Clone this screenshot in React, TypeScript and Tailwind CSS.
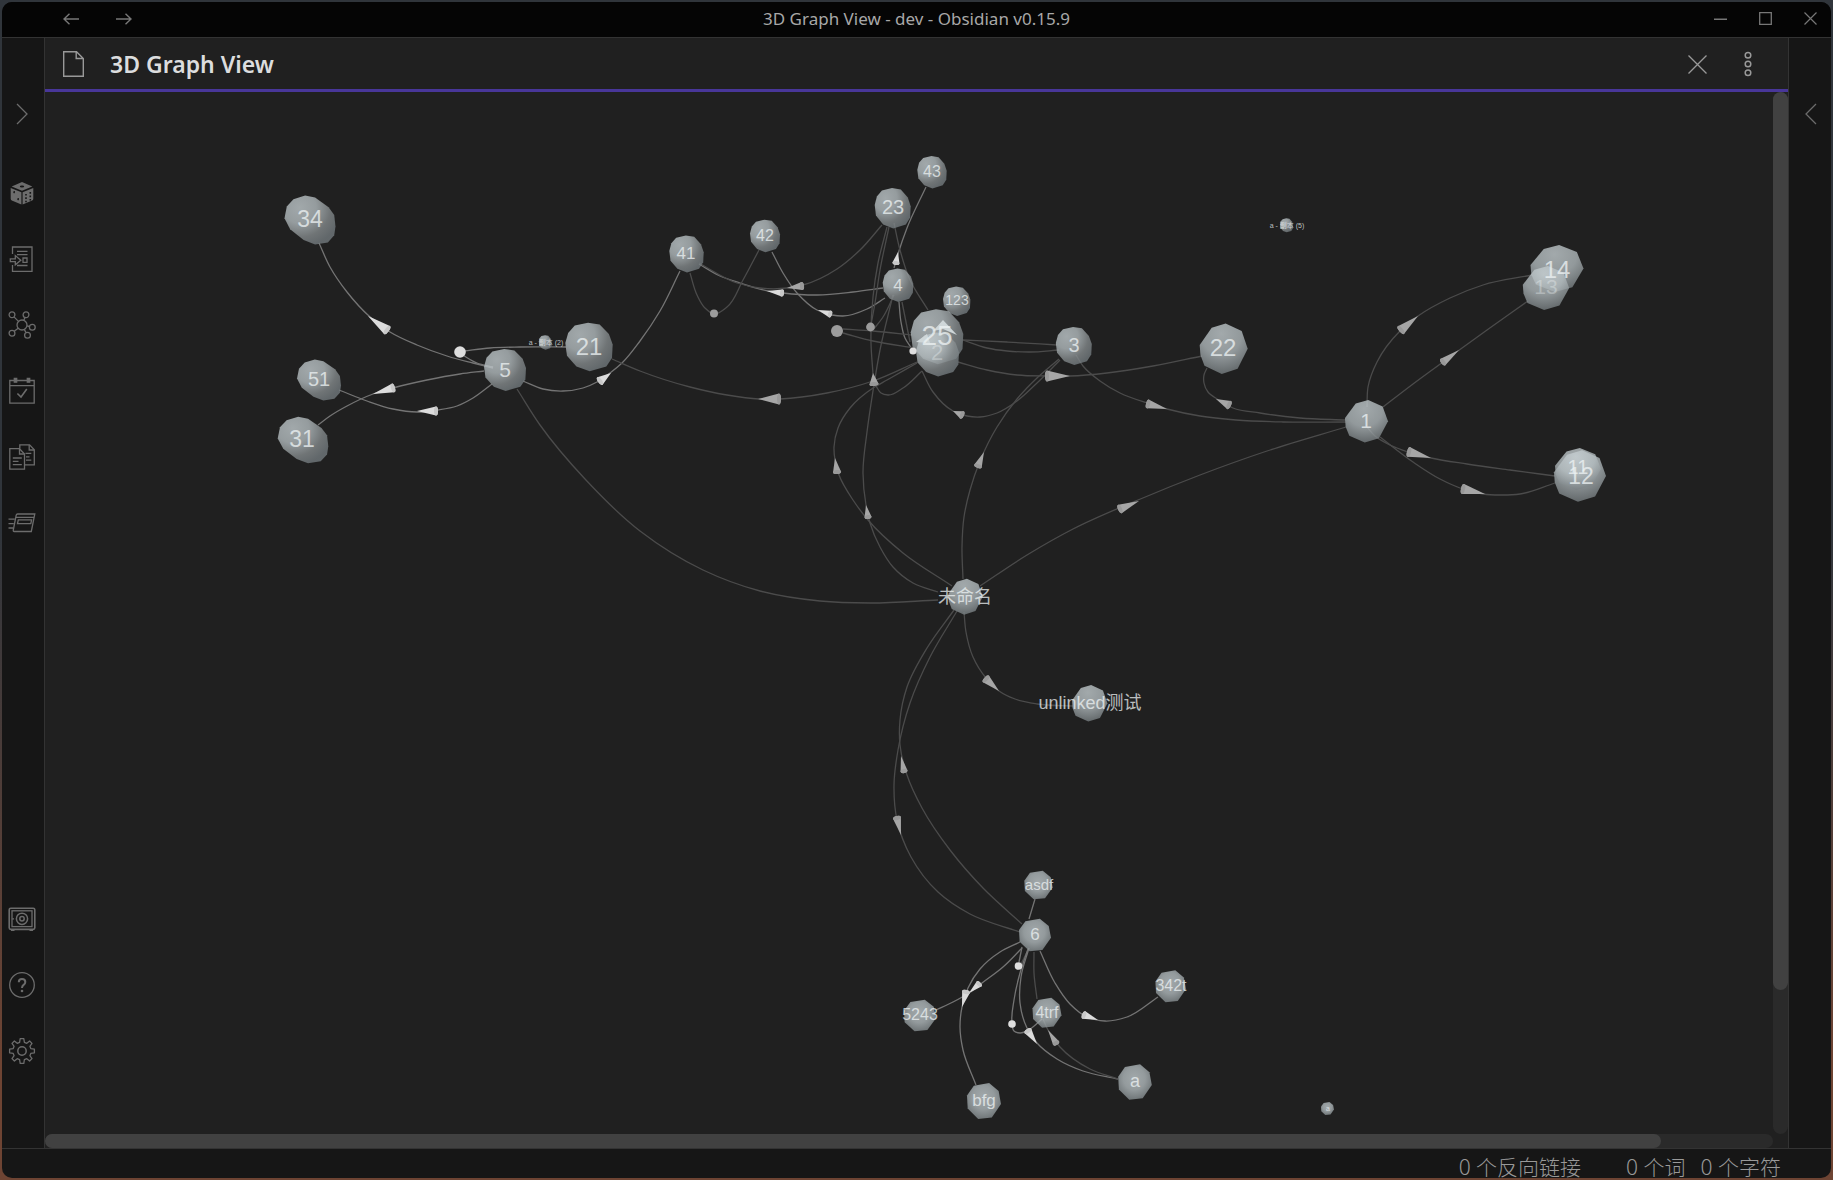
import React from "react";

type Point = [number, number];
type Tone = "bright" | "dim";

interface GraphLink {
  tone: Tone;
  points: Point[];
}

interface Arrow {
  tone: Tone;
  tip: Point;
  base: Point;
  width: number;
}

interface GraphNode {
  label: string;
  cx: number;
  cy: number;
  rx: number;
  ry: number;
  shape: keyof typeof SHAPES;
  text: Point; // label centre
  size: number; // label font size
  faded?: boolean; // label sits behind another mesh
}

// low-poly sphere outlines, in units of the node radius
const SHAPES = {
  stretched: [
    [-1, -0.07], [-0.91, -0.55], [-0.65, -0.85], [-0.19, -1], [0.2, -0.92],
    [0.73, -0.52], [0.95, -0.2], [1, 0.27], [0.95, 0.62], [0.7, 0.92],
    [0.2, 1], [-0.25, 0.82], [-0.78, 0.38],
  ],
  round: [
    [-1, -0.16], [-0.88, -0.58], [-0.6, -0.88], [-0.04, -1], [0.45, -0.93],
    [0.84, -0.53], [1, -0.1], [0.97, 0.45], [0.73, 0.8], [0.03, 1],
    [-0.53, 0.8], [-0.93, 0.36],
  ],
  facet: [
    [-1, -0.15], [-0.5, -0.83], [0.08, -1], [0.75, -0.7], [1, 0],
    [0.58, 0.8], [-0.08, 1], [-0.8, 0.68], [-0.97, 0.25],
  ],
  octagon: [
    [-1, -0.3], [-0.6, -0.85], [0.3, -1], [0.86, -0.55], [1, 0.17],
    [0.46, 0.92], [-0.34, 1], [-0.96, 0.42],
  ],
} as const;

const SHADES: Record<keyof typeof SHAPES, string> = {
  stretched: "url(#shade-corner)",
  round: "url(#shade-corner)",
  facet: "url(#shade-top)",
  octagon: "url(#shade-center)",
};

const nodes: GraphNode[] = [
  { label: "34", cx: 310, cy: 220, rx: 25.5, ry: 24.5, shape: "stretched", text: [310, 219], size: 23 },
  { label: "51", cx: 319, cy: 380, rx: 22, ry: 20.5, shape: "stretched", text: [319, 379], size: 20 },
  { label: "31", cx: 303, cy: 440, rx: 25.3, ry: 23.2, shape: "stretched", text: [302, 439], size: 23 },
  { label: "5", cx: 505, cy: 370, rx: 21, ry: 21, shape: "round", text: [505, 369], size: 21 },
  { label: "21", cx: 589, cy: 347, rx: 23.7, ry: 24.3, shape: "round", text: [589, 346], size: 24 },
  { label: "41", cx: 686.5, cy: 254, rx: 17.2, ry: 18.5, shape: "round", text: [686, 253], size: 17 },
  { label: "42", cx: 765, cy: 236, rx: 15, ry: 16.3, shape: "round", text: [765, 235], size: 16 },
  { label: "23", cx: 892.7, cy: 208.3, rx: 18, ry: 20.3, shape: "round", text: [893, 207], size: 20 },
  { label: "43", cx: 932, cy: 172.3, rx: 14.7, ry: 16.3, shape: "round", text: [932, 171], size: 16 },
  { label: "4", cx: 898, cy: 285.3, rx: 15.3, ry: 16.7, shape: "round", text: [898, 285], size: 17 },
  { label: "123", cx: 956.7, cy: 301.3, rx: 13.7, ry: 14.7, shape: "round", text: [957, 300], size: 14 },
  { label: "25", cx: 937, cy: 336.7, rx: 26.3, ry: 27.5, shape: "round", text: [937, 335], size: 28 },
  { label: "2", cx: 937.5, cy: 354.5, rx: 21.5, ry: 22, shape: "round", text: [937, 352], size: 22, faded: true },
  { label: "3", cx: 1073.8, cy: 346, rx: 18, ry: 19, shape: "round", text: [1074, 345], size: 20 },
  { label: "22", cx: 1223.7, cy: 348.7, rx: 24, ry: 25.2, shape: "facet", text: [1223, 347], size: 24 },
  { label: "14", cx: 1557, cy: 268.5, rx: 26.5, ry: 23.5, shape: "facet", text: [1557, 269], size: 24 },
  { label: "13", cx: 1546, cy: 288, rx: 23.2, ry: 22, shape: "facet", text: [1546, 286], size: 21, faded: true },
  { label: "1", cx: 1366.5, cy: 421.3, rx: 21.5, ry: 21.3, shape: "facet", text: [1366, 420], size: 21 },
  { label: "12", cx: 1580, cy: 476, rx: 26, ry: 25.7, shape: "facet", text: [1581, 476], size: 23 },
  { label: "11", cx: 1578, cy: 469, rx: 23, ry: 21, shape: "facet", text: [1578, 467], size: 20 },
  { label: "未命名", cx: 965.5, cy: 596.7, rx: 17.2, ry: 18, shape: "facet", text: [965, 597], size: 18 },
  { label: "unlinked测试", cx: 1089.7, cy: 703.3, rx: 17.7, ry: 18.3, shape: "facet", text: [1090, 703], size: 18 },
  { label: "asdf", cx: 1038.5, cy: 885, rx: 14.2, ry: 14.3, shape: "octagon", text: [1039, 884], size: 15 },
  { label: "6", cx: 1035, cy: 935, rx: 16, ry: 16.3, shape: "octagon", text: [1035, 934], size: 17 },
  { label: "5243", cx: 920, cy: 1015.5, rx: 16, ry: 15.8, shape: "octagon", text: [920, 1014], size: 16 },
  { label: "4trf", cx: 1047, cy: 1012.7, rx: 14.5, ry: 15, shape: "octagon", text: [1047, 1012], size: 16 },
  { label: "342t", cx: 1170.7, cy: 986.3, rx: 15.3, ry: 16, shape: "octagon", text: [1171, 985], size: 16 },
  { label: "a", cx: 1135, cy: 1082, rx: 16.8, ry: 17.7, shape: "octagon", text: [1135, 1081], size: 18 },
  { label: "bfg", cx: 984, cy: 1101, rx: 17, ry: 18, shape: "octagon", text: [984, 1100], size: 17 },
  { label: "a - 副本 (2)", cx: 545.3, cy: 342.5, rx: 6.5, ry: 7.3, shape: "round", text: [546, 342], size: 7 },
  { label: "a - 副本 (5)", cx: 1286.5, cy: 225.3, rx: 6.5, ry: 7, shape: "round", text: [1287, 225], size: 7 },
  { label: "a", cx: 1327.5, cy: 1108.5, rx: 6.5, ry: 6.5, shape: "octagon", text: [1328, 1108], size: 7 },
];

const links: GraphLink[] = [
  { tone: "bright", points: [[493, 368], [473, 363], [447, 356], [417, 345], [390, 332], [369, 316], [347, 292], [330, 267], [319, 243]] },
  { tone: "bright", points: [[493, 367], [477, 363], [461, 354]] },
  { tone: "bright", points: [[464, 351], [490, 348], [520, 347], [566, 347]] },
  { tone: "bright", points: [[484, 371], [460, 374], [427, 380], [393, 388], [373, 394], [347, 406], [330, 416], [318, 425]] },
  { tone: "bright", points: [[492, 384], [473, 398], [457, 406], [438, 410], [417, 412], [393, 409], [367, 401], [339, 390]] },
  { tone: "bright", points: [[523, 381], [543, 389], [563, 391], [583, 388], [597, 382], [610, 373], [622, 363], [640, 341], [660, 311], [680, 271]] },
  { tone: "dim", points: [[517, 389], [540, 425], [585, 479], [640, 531], [703, 570], [760, 591], [820, 601], [870, 603], [938, 600]] },
  { tone: "dim", points: [[612, 359], [640, 371], [690, 387], [727, 395], [759, 399], [780, 399], [827, 393], [873, 381], [917, 362]] },
  { tone: "bright", points: [[699, 264], [720, 276], [740, 283], [768, 291], [783, 293], [817, 295], [853, 292], [883, 288]] },
  { tone: "dim", points: [[882, 225], [860, 250], [837, 269], [803, 285], [787, 288], [760, 288], [737, 283], [699, 263]] },
  { tone: "dim", points: [[690, 273], [697, 295], [705, 308], [714, 314], [727, 307], [743, 280], [759, 250]] },
  { tone: "bright", points: [[885, 298], [867, 309], [843, 316], [832, 315], [817, 310], [797, 293], [783, 273], [772, 252]] },
  { tone: "bright", points: [[894, 268], [898, 254], [907, 228], [926, 187]] },
  { tone: "dim", points: [[887, 227], [878, 263], [873, 297], [871, 343], [873, 374]] },
  { tone: "dim", points: [[889, 227], [880, 270], [875, 303], [871, 325]] },
  { tone: "dim", points: [[873, 330], [883, 317], [894, 295]] },
  { tone: "dim", points: [[893, 295], [880, 350], [873, 391], [867, 432], [863, 473], [866, 505], [870, 523], [880, 547], [893, 567], [913, 583], [938, 592]] },
  { tone: "dim", points: [[917, 363], [887, 380], [873, 388], [850, 408], [838, 428], [834, 447], [835, 460], [839, 475], [853, 500], [868, 520], [903, 553], [952, 586]] },
  { tone: "dim", points: [[876, 386], [881, 393], [888, 395], [903, 388], [922, 371]] },
  { tone: "dim", points: [[894, 223], [900, 250], [910, 280], [928, 310]] },
  { tone: "bright", points: [[899, 302], [901, 322], [905, 338], [912, 349]] },
  { tone: "dim", points: [[902, 302], [907, 327], [910, 342]] },
  { tone: "dim", points: [[843, 329], [873, 331], [912, 335]] },
  { tone: "dim", points: [[843, 333], [873, 341], [915, 348]] },
  { tone: "dim", points: [[963, 340], [1007, 342], [1057, 345]] },
  { tone: "dim", points: [[963, 340], [987, 348], [1007, 351], [1030, 352], [1059, 350]] },
  { tone: "dim", points: [[958, 362], [987, 370], [1017, 375], [1047, 376], [1070, 376], [1107, 373], [1153, 366], [1202, 356]] },
  { tone: "dim", points: [[1076, 355], [1083, 366], [1100, 381], [1120, 393], [1147, 403], [1167, 409], [1200, 416], [1236, 420], [1283, 422], [1346, 422]] },
  { tone: "dim", points: [[1346, 420], [1300, 418], [1260, 413], [1233, 408], [1217, 399], [1208, 392], [1204, 383], [1204, 375], [1207, 368]] },
  { tone: "dim", points: [[922, 371], [933, 392], [953, 411], [967, 416], [980, 417], [997, 413], [1017, 401], [1037, 383], [1060, 360]] },
  { tone: "dim", points: [[963, 579], [962, 547], [964, 517], [970, 490], [980, 461], [997, 427], [1017, 399], [1037, 378], [1059, 359]] },
  { tone: "dim", points: [[980, 586], [1027, 555], [1073, 529], [1138, 500], [1200, 475], [1267, 451], [1346, 427]] },
  { tone: "dim", points: [[1367, 407], [1368, 387], [1377, 362], [1400, 331], [1418, 316], [1450, 298], [1483, 285], [1532, 275]] },
  { tone: "dim", points: [[1383, 407], [1413, 384], [1443, 362], [1487, 330], [1528, 301]] },
  { tone: "dim", points: [[1367, 427], [1375, 436], [1390, 445], [1408, 452], [1431, 458], [1467, 464], [1510, 470], [1555, 476]] },
  { tone: "dim", points: [[1380, 437], [1413, 462], [1440, 479], [1463, 489], [1483, 494], [1500, 495], [1520, 494], [1555, 483]] },
  { tone: "dim", points: [[964, 612], [966, 632], [973, 657], [986, 678], [999, 691], [1015, 699], [1037, 704], [1073, 706]] },
  { tone: "dim", points: [[954, 610], [927, 648], [907, 687], [900, 720], [900, 745], [907, 775], [922, 808], [950, 850], [983, 888], [1022, 924]] },
  { tone: "dim", points: [[957, 611], [930, 657], [910, 703], [898, 750], [894, 785], [897, 820], [911, 857], [938, 892], [970, 914], [1020, 932]] },
  { tone: "bright", points: [[1029, 919], [1035, 899]] },
  { tone: "bright", points: [[1022, 947], [1019, 962]] },
  { tone: "dim", points: [[1028, 950], [1020, 966]] },
  { tone: "bright", points: [[1022, 948], [1003, 967], [982, 983], [969, 993], [953, 1002], [936, 1010]] },
  { tone: "bright", points: [[1020, 942], [1000, 952], [980, 969], [968, 988], [962, 1007], [960, 1027], [963, 1050], [976, 1085]] },
  { tone: "bright", points: [[1028, 949], [1020, 973], [1014, 1000], [1012, 1022], [1014, 1031], [1020, 1033], [1030, 1029], [1042, 1019]] },
  { tone: "bright", points: [[1029, 948], [1021, 977], [1020, 1003], [1027, 1028], [1037, 1043], [1057, 1059], [1083, 1071], [1118, 1079]] },
  { tone: "dim", points: [[1118, 1079], [1090, 1069], [1060, 1047], [1048, 1030], [1043, 1019]] },
  { tone: "dim", points: [[1037, 999], [1034, 973], [1034, 952]] },
  { tone: "bright", points: [[1040, 951], [1055, 983], [1070, 1004], [1087, 1017], [1105, 1021], [1127, 1017], [1158, 997]] },
];

const arrows: Arrow[] = [
  { tone: "bright", tip: [368, 316], base: [387, 330], width: 10 },
  { tone: "bright", tip: [373, 394], base: [393, 388], width: 9 },
  { tone: "bright", tip: [417, 411], base: [436, 411], width: 9 },
  { tone: "bright", tip: [611, 373], base: [600, 381], width: 9 },
  { tone: "bright", tip: [767, 291], base: [782, 293], width: 7 },
  { tone: "dim", tip: [787, 288], base: [802, 286], width: 8 },
  { tone: "bright", tip: [818, 310], base: [830, 314], width: 7 },
  { tone: "bright", tip: [898, 252], base: [896, 263], width: 7 },
  { tone: "dim", tip: [758, 399], base: [779, 399], width: 11 },
  { tone: "dim", tip: [873, 373], base: [874, 384], width: 9 },
  { tone: "dim", tip: [953, 411], base: [962, 415], width: 8 },
  { tone: "dim", tip: [1070, 376], base: [1047, 376], width: 11 },
  { tone: "dim", tip: [1167, 409], base: [1148, 404], width: 9 },
  { tone: "dim", tip: [1216, 399], base: [1229, 405], width: 9 },
  { tone: "dim", tip: [835, 458], base: [837, 472], width: 8 },
  { tone: "dim", tip: [866, 505], base: [868, 517], width: 7 },
  { tone: "dim", tip: [984, 452], base: [978, 466], width: 8 },
  { tone: "dim", tip: [1139, 501], base: [1120, 509], width: 9 },
  { tone: "dim", tip: [1418, 316], base: [1401, 330], width: 10 },
  { tone: "dim", tip: [1459, 350], base: [1443, 362], width: 8 },
  { tone: "dim", tip: [1431, 458], base: [1409, 452], width: 10 },
  { tone: "dim", tip: [1485, 494], base: [1463, 489], width: 10 },
  { tone: "dim", tip: [999, 691], base: [986, 679], width: 9 },
  { tone: "dim", tip: [901, 756], base: [904, 771], width: 7 },
  { tone: "dim", tip: [901, 835], base: [897, 818], width: 8 },
  { tone: "bright", tip: [969, 993], base: [979, 984], width: 7 },
  { tone: "bright", tip: [962, 1007], base: [966, 992], width: 8 },
  { tone: "bright", tip: [1037, 1044], base: [1028, 1031], width: 8 },
  { tone: "dim", tip: [1048, 1030], base: [1056, 1043], width: 7 },
  { tone: "bright", tip: [1098, 1020], base: [1084, 1015], width: 8 },
];

// arrow cones that face the camera
const cones: { tone: Tone; at: Point; r: number }[] = [
  { tone: "bright", at: [460, 352], r: 5.8 },
  { tone: "dim", at: [714, 313.5], r: 4 },
  { tone: "dim", at: [837, 331], r: 6 },
  { tone: "dim", at: [870.5, 327], r: 4.4 },
  { tone: "bright", at: [913, 351], r: 3.6 },
  { tone: "bright", at: [1018.5, 966], r: 3.8 },
  { tone: "bright", at: [1012, 1024], r: 3.8 },
];

const dist = (a: Point, b: Point) => Math.hypot(b[0] - a[0], b[1] - a[1]);

// direction of the curve at pts[i], weighted by the distance to its neighbours
const tangent = (pts: Point[], i: number): Point => {
  const p = pts[i];
  const prev = pts[i - 1];
  const next = pts[i + 1];
  if (!prev || !next) {
    const a = prev ?? p;
    const b = next ?? p;
    const d = dist(a, b);
    return [(b[0] - a[0]) / d, (b[1] - a[1]) / d];
  }
  const d0 = dist(prev, p);
  const d1 = dist(p, next);
  const along = (k: 0 | 1) =>
    (((p[k] - prev[k]) / d0) * d1 + ((next[k] - p[k]) / d1) * d0) / (d0 + d1);
  return [along(0), along(1)];
};

const linePath = (pts: Point[]) => {
  let d = `M${pts[0][0]} ${pts[0][1]}`;
  for (let i = 0; i < pts.length - 1; i++) {
    const p = pts[i];
    const q = pts[i + 1];
    const t0 = tangent(pts, i);
    const t1 = tangent(pts, i + 1);
    const h = dist(p, q) / 3;
    d += `C${p[0] + t0[0] * h} ${p[1] + t0[1] * h} ${q[0] - t1[0] * h} ${
      q[1] - t1[1] * h
    } ${q[0]} ${q[1]}`;
  }
  return d;
};

const ArrowHead: React.FC<Arrow> = ({ tone, tip, base, width }) => {
  const dx = tip[0] - base[0];
  const dy = tip[1] - base[1];
  const len = Math.hypot(dx, dy);
  const half = width / 2;
  const angle = (Math.atan2(dy, dx) * 180) / Math.PI;
  return (
    <g transform={`translate(${base[0]} ${base[1]}) rotate(${angle})`}>
      <path
        d={`M${len} 0L0 ${-half}A2 ${half} 0 0 0 0 ${half}Z`}
        fill={tone === "bright" ? "#dcdcdc" : "#a6a6a6"}
      />
      <ellipse
        rx={2}
        ry={half}
        fill={tone === "bright" ? "#c8c8c8" : "#999999"}
      />
    </g>
  );
};

const Graph = () => (
  <svg
    viewBox="45 92 1728 1042"
    className="block h-full w-full"
    role="img"
    aria-label="3D graph"
  >
    <defs>
      <radialGradient id="shade-corner" cx="0.3" cy="0.25" r="0.8">
        <stop offset="0" stopColor="#cad3d6" />
        <stop offset="0.4" stopColor="#bac3c6" />
        <stop offset="0.75" stopColor="#898f91" />
        <stop offset="1" stopColor="#767e82" />
      </radialGradient>
      <radialGradient id="shade-top" cx="0.45" cy="0.2" r="0.85">
        <stop offset="0" stopColor="#cbd4d7" />
        <stop offset="0.5" stopColor="#b6bfc2" />
        <stop offset="1" stopColor="#70777a" />
      </radialGradient>
      <radialGradient id="shade-center" cx="0.48" cy="0.4" r="0.65">
        <stop offset="0" stopColor="#cad3d6" />
        <stop offset="0.5" stopColor="#b8c1c4" />
        <stop offset="1" stopColor="#80888b" />
      </radialGradient>
    </defs>

    {links.map((link, i) => (
      <path
        key={i}
        d={linePath(link.points)}
        fill="none"
        stroke={link.tone === "bright" ? "#747474" : "#4b4b4b"}
        strokeWidth={1.3}
      />
    ))}

    {nodes.map((node, i) => (
      <polygon
        key={i}
        points={SHAPES[node.shape]
          .map(([x, y]) => `${node.cx + x * node.rx},${node.cy + y * node.ry}`)
          .join(" ")}
        fill={SHADES[node.shape]}
        fillOpacity={0.76}
      />
    ))}

    {/* two arrows seen through node 25 */}
    <path d="M943 320L933 331L943 329L957 335Z" fill="#cfd7d9" />
    <path d="M916 342L927 334L930 343Z" fill="#cfd7d9" />

    {nodes.map((node, i) => (
      <text
        key={i}
        x={node.text[0]}
        y={node.text[1]}
        fontSize={node.size}
        fill="#eef3f4"
        fillOpacity={node.faded ? 0.35 : 0.75}
        textAnchor="middle"
        dominantBaseline="central"
        className="font-['Liberation_Sans','Noto_Sans_CJK_SC',sans-serif]"
      >
        {node.label}
      </text>
    ))}

    {arrows.map((arrow, i) => (
      <ArrowHead key={i} {...arrow} />
    ))}
    {cones.map((cone, i) => (
      <circle
        key={i}
        cx={cone.at[0]}
        cy={cone.at[1]}
        r={cone.r}
        fill={cone.tone === "bright" ? "#dedede" : "#9c9c9c"}
      />
    ))}
  </svg>
);

const Icon: React.FC<{ children: React.ReactNode }> = ({ children }) => (
  <svg
    viewBox="0 0 28 28"
    className="h-7 w-7"
    fill="none"
    stroke="currentColor"
    strokeWidth={1.3}
    aria-hidden="true"
  >
    {children}
  </svg>
);

const DiceIcon = () => (
  <Icon>
    <g fill="currentColor" stroke="none" fillRule="evenodd">
      <path d="M14 3L24.3 7.6L14 11.8L3.7 7.6ZM14 6.6A2.2 0.9 0 1 0 14 8.4A2.2 0.9 0 1 0 14 6.6Z" />
      <path d="M2.7 9L13.4 13.2V25.6L3.8 21.5Q2.7 21 2.7 19.8ZM5.4 12.8a.8 1 0 1 0 1.5 .6a.8 1 0 1 0-1.5-.6ZM9.4 19.8a.8 1 0 1 0 1.5 .6a.8 1 0 1 0-1.5-.6Z" />
      <path d="M25.3 9L14.6 13.2V25.6L24.2 21.5Q25.3 21 25.3 19.8ZM17.2 14.9h1.6v1.6h-1.6ZM21.5 13.1h1.6v1.6h-1.6ZM17.2 18.3h1.6v1.6h-1.6ZM21.5 16.6h1.6v1.6h-1.6ZM17.2 21.7h1.6v1.6h-1.6ZM21.5 20h1.6v1.6h-1.6Z" />
    </g>
  </Icon>
);

const InsertIcon = () => (
  <Icon>
    <path d="M4.5 9V2H24V26.4H4.5V20" />
    <path d="M9 6.3H19.5M9 9.6H19.5M9 20.5H19.5" />
    <path d="M2.3 13.8H7.3V10.6L12.8 15.2L7.3 19.8V16.7H2.3Z" />
    <path d="M15 13H19V17.4H15Z" />
  </Icon>
);

const GraphIcon = () => (
  <Icon>
    <circle cx="14" cy="14" r="5" />
    <circle cx="4" cy="3.8" r="2.9" />
    <circle cx="18" cy="3.8" r="2.9" />
    <circle cx="24.3" cy="16.2" r="2.9" />
    <circle cx="19.5" cy="24.2" r="2.9" />
    <circle cx="4" cy="22.2" r="2.9" />
    <path d="M6 5.9L10.5 10.4M17 6.5L15.8 9.3M19 14.9L21.4 15.5M16.3 18.4L18 21.6M6.2 20.3L10.2 17.3" />
  </Icon>
);

const CalendarIcon = () => (
  <Icon>
    <path d="M1.8 3.5H26.2V26.2H1.8ZM1.8 8.6H26.2" />
    <path d="M6.3 1.5H8.7V5.2H6.3ZM19.3 1.5H21.7V5.2H19.3Z" fill="currentColor" />
    <path d="M9.4 16.5L13 20L18.8 12" strokeWidth={1.6} />
  </Icon>
);

const FilesIcon = () => (
  <Icon>
    <path d="M1.8 5.7H11.5L16.5 11V26.2H1.8Z" />
    <path d="M11.5 5.7V11H16.5" />
    <path d="M11.8 5.5V1.8H21.6L26.3 6.8V21.8H17" />
    <path d="M21.2 2V7H26" />
    <path d="M4.8 15H13.8M4.8 18.3H10.5M4.8 21.6H13.8M17.5 10.4H23.3M18 13.8H21.5M18 17.2H23.3" />
  </Icon>
);

const PromptIcon = () => (
  <Icon>
    <path d="M9.5 5H26.8L23.3 22.5H6.2Q5 22.5 5.3 21L8.2 6.2Q8.5 5 9.5 5ZM8 8.3H26" />
    <path d="M10.3 10.8H23.6L22.8 14.7H9.5Z" />
    <path d="M0.5 10.2H6.8M0.5 14.6H5.8M0.5 19H5" />
  </Icon>
);

const VaultIcon = () => (
  <Icon>
    <rect x="1.2" y="3.2" width="25.6" height="21.2" rx="1.6" strokeWidth={1.6} />
    <rect x="4" y="5.8" width="20" height="15.8" />
    <circle cx="14" cy="13.8" r="5.6" strokeWidth={1.5} />
    <circle cx="14" cy="13.8" r="2.2" strokeWidth={1.5} />
    <path d="M4.2 13.8H6M3 25.3H6.5M21.5 25.3H25" />
  </Icon>
);

const HelpIcon = () => (
  <Icon>
    <circle cx="14" cy="14" r="12.3" />
    <path
      d="M10.8 11.2Q10.8 8 14 8Q17.3 8 17.3 10.9Q17.3 12.6 15.6 13.9Q14 15.1 14 17"
      strokeWidth={2}
    />
    <circle cx="14" cy="20" r="1.3" fill="currentColor" stroke="none" />
  </Icon>
);

const GearIcon = () => (
  <Icon>
    <circle cx="14" cy="14" r="4.2" strokeWidth={1.5} />
    <path
      strokeLinejoin="round"
      d="M12.2 1.6H15.8L16.4 5.3L18.8 6.3L21.6 4L24 6.4L21.9 9.3L22.8 11.6L26.4 12.2V15.8L22.8 16.4L21.9 18.7L24 21.6L21.6 24L18.8 21.7L16.4 22.7L15.8 26.4H12.2L11.6 22.7L9.2 21.7L6.4 24L4 21.6L6.1 18.7L5.2 16.4L1.6 15.8V12.2L5.2 11.6L6.1 9.3L4 6.4L6.4 4L9.2 6.3L11.6 5.3Z"
    />
  </Icon>
);

const ribbonActions = [
  { name: "Open random note", icon: <DiceIcon /> },
  { name: "Insert template", icon: <InsertIcon /> },
  { name: "Open graph view", icon: <GraphIcon /> },
  { name: "Open daily note", icon: <CalendarIcon /> },
  { name: "Copy files", icon: <FilesIcon /> },
  { name: "Open command palette", icon: <PromptIcon /> },
];

const vaultActions = [
  { name: "Open another vault", icon: <VaultIcon /> },
  { name: "Help", icon: <HelpIcon /> },
  { name: "Settings", icon: <GearIcon /> },
];

const RibbonButton: React.FC<{ name: string; children: React.ReactNode }> = ({
  name,
  children,
}) => (
  <button
    type="button"
    aria-label={name}
    className="flex h-[66px] w-full items-center justify-center"
  >
    {children}
  </button>
);

const TitleBar = () => (
  <header className="grid h-9 shrink-0 grid-cols-[1fr_auto_1fr] items-center border-b border-[#333] bg-[#050505] pb-0.5 text-[#777]">
    <nav className="flex gap-[37px] pl-[61px]">
      <button type="button" aria-label="Back">
        <svg viewBox="0 0 16 12" className="h-3 w-4" fill="none" stroke="currentColor" strokeWidth={1.4}>
          <path d="M16 6H1M6.5 0.7L1 6L6.5 11.3" />
        </svg>
      </button>
      <button type="button" aria-label="Forward">
        <svg viewBox="0 0 16 12" className="h-3 w-4" fill="none" stroke="currentColor" strokeWidth={1.4}>
          <path d="M0 6H15M9.5 0.7L15 6L9.5 11.3" />
        </svg>
      </button>
    </nav>
    <h1 className="text-[17px] leading-6 text-[#a8a8a8]">
      3D Graph View - dev - Obsidian v0.15.9
    </h1>
    <div className="flex justify-end gap-8 pr-3.5">
      <button type="button" aria-label="Minimize">
        <svg viewBox="0 0 13 13" className="h-[13px] w-[13px]" stroke="currentColor" strokeWidth={1.6}>
          <path d="M0 7.2H13" />
        </svg>
      </button>
      <button type="button" aria-label="Maximize">
        <svg viewBox="0 0 13 13" className="h-[13px] w-[13px]" fill="none" stroke="currentColor" strokeWidth={1.3}>
          <path d="M0.7 0.7H12.3V12.3H0.7Z" />
        </svg>
      </button>
      <button type="button" aria-label="Close window">
        <svg viewBox="0 0 13 13" className="h-[13px] w-[13px]" stroke="currentColor" strokeWidth={1.2}>
          <path d="M0.5 0.5L12.5 12.5M12.5 0.5L0.5 12.5" />
        </svg>
      </button>
    </div>
  </header>
);

const ViewHeader = () => (
  <div className="flex h-[54px] shrink-0 items-center border-b-3 border-[#483699] pr-[35px] pl-[18px] text-[#999]">
    <svg viewBox="0 0 21 26" className="h-[26px] w-[21px]" fill="none" stroke="currentColor" strokeWidth={1.4} aria-hidden="true">
      <path d="M0.7 0.7H13.5L20.3 7.5V25.3H0.7ZM13.2 1V7.5H20" />
    </svg>
    <h2 className="ml-[26px] flex-1 text-[23px] leading-8 font-semibold text-[#dcddde]">
      3D Graph View
    </h2>
    <button type="button" aria-label="Close" className="mt-0.5 mr-9">
      <svg viewBox="0 0 19 19" className="h-[19px] w-[19px]" stroke="currentColor" strokeWidth={1.3}>
        <path d="M0.5 0.5L18.5 18.5M18.5 0.5L0.5 18.5" />
      </svg>
    </button>
    <button type="button" aria-label="More options">
      <svg viewBox="0 0 10 26" className="h-[26px] w-2.5" fill="none" stroke="currentColor" strokeWidth={1.5}>
        <circle cx="5" cy="4.3" r="2.8" />
        <circle cx="5" cy="13" r="2.8" />
        <circle cx="5" cy="21.7" r="2.8" />
      </svg>
    </button>
  </div>
);

export default function App() {
  return (
    <div className="h-screen bg-linear-to-b from-[#30353b] from-45% to-[#6e4433] to-90% p-0.5 font-['Noto_Sans','Noto_Sans_CJK_SC',sans-serif]">
      <div className="flex h-full flex-col overflow-hidden rounded-[10px] bg-[#161616]">
        <TitleBar />

        <div className="flex min-h-0 flex-1">
          {/* left ribbon */}
          <aside className="flex w-[43px] shrink-0 flex-col border-r border-[#333] pt-[43px] pr-0.5 pb-16 text-[#6c6c6c]">
            <RibbonButton name="Expand left sidebar">
              <svg viewBox="0 0 12 22" className="h-[22px] w-3" fill="none" stroke="currentColor" strokeWidth={1.3}>
                <path d="M1 1L11 11L1 21" />
              </svg>
            </RibbonButton>
            <div className="mt-[13px]">
              {ribbonActions.map((action) => (
                <RibbonButton key={action.name} name={action.name}>
                  {action.icon}
                </RibbonButton>
              ))}
            </div>
            <div className="mt-auto">
              {vaultActions.map((action) => (
                <RibbonButton key={action.name} name={action.name}>
                  {action.icon}
                </RibbonButton>
              ))}
            </div>
          </aside>

          <main className="flex min-w-0 flex-1 flex-col bg-[#202020]">
            <ViewHeader />
            <div className="grid min-h-0 flex-1 grid-cols-[minmax(0,1fr)_15px] grid-rows-[minmax(0,1fr)_14px]">
              <Graph />
              <div className="rounded-full bg-[#2a2a2a]">
                <div className="h-[86.2%] rounded-full bg-[#414141]" />
              </div>
              <div className="rounded-full bg-[#2a2a2a]">
                <div className="h-full w-[93.5%] rounded-full bg-[#414141]" />
              </div>
            </div>
          </main>

          {/* right ribbon */}
          <aside className="w-[43px] shrink-0 border-l border-[#333] pt-[43px] pl-0.5 text-[#6c6c6c]">
            <RibbonButton name="Expand right sidebar">
              <svg viewBox="0 0 12 22" className="h-[22px] w-3" fill="none" stroke="currentColor" strokeWidth={1.3}>
                <path d="M11 1L1 11L11 21" />
              </svg>
            </RibbonButton>
          </aside>
        </div>

        <footer className="flex h-[30px] shrink-0 justify-end border-t border-[#333] pt-[7px] pr-[50px] text-[21px] leading-[22px] font-light text-[#999]">
          <span className="mr-[45px]">0 个反向链接</span>
          <span className="mr-[15px]">0 个词</span>
          <span>0 个字符</span>
        </footer>
      </div>
    </div>
  );
}
